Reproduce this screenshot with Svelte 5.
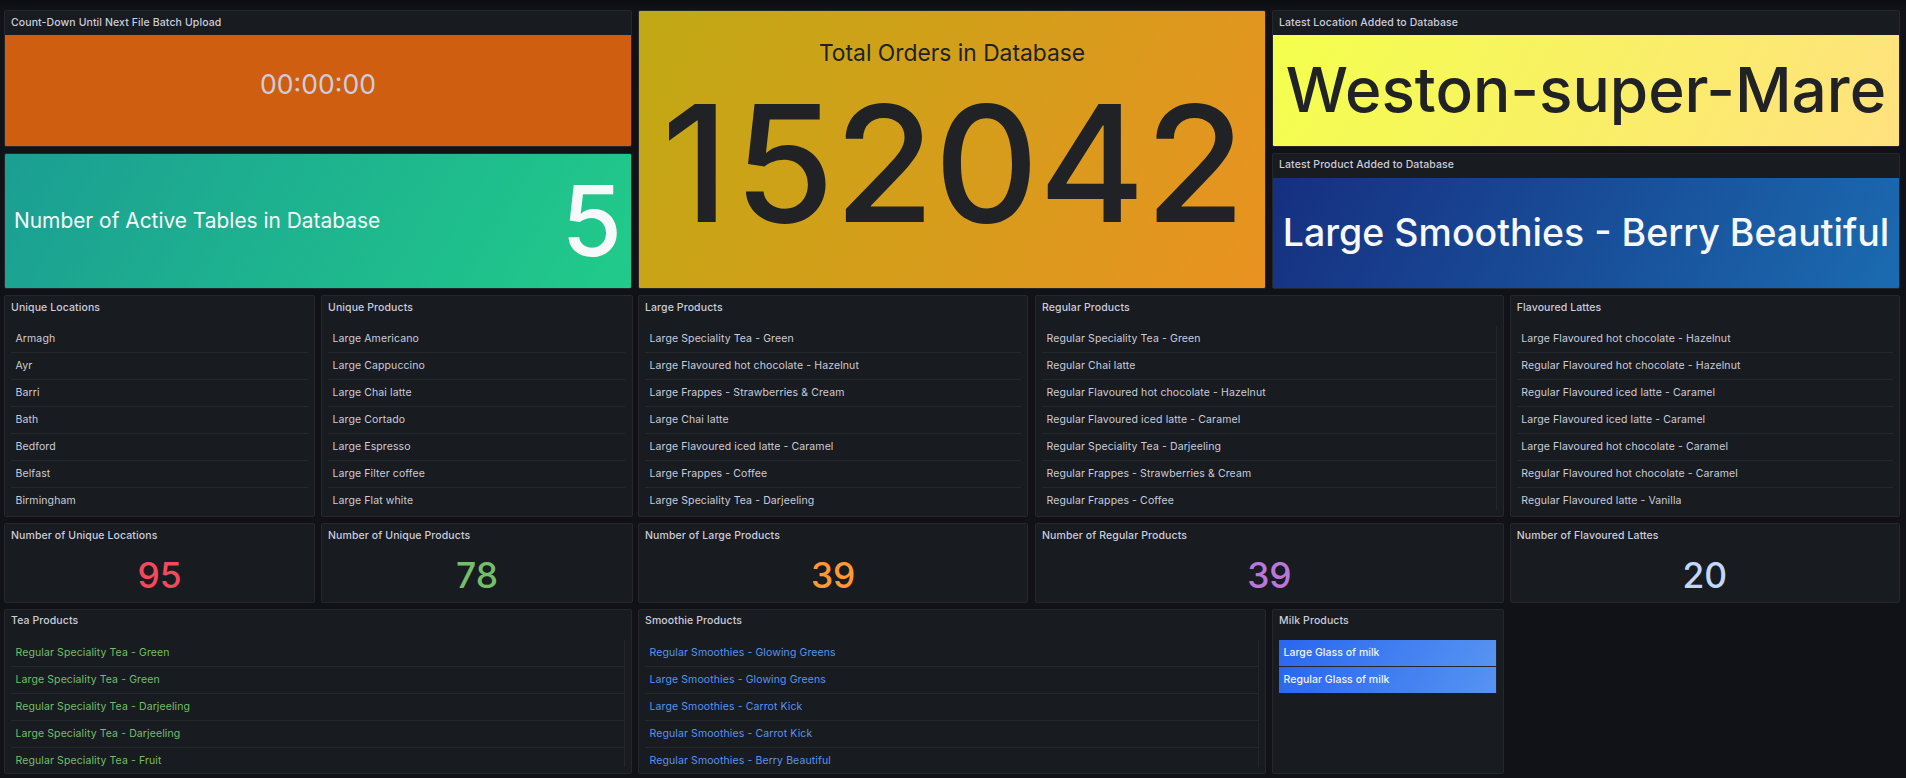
<script>
  const lists = [
    { title: 'Unique Locations', span: 4, items: ['Armagh', 'Ayr', 'Barri', 'Bath', 'Bedford', 'Belfast', 'Birmingham'] },
    { title: 'Unique Products', span: 4, nudge: 'wide', items: ['Large Americano', 'Large Cappuccino', 'Large Chai latte', 'Large Cortado', 'Large Espresso', 'Large Filter coffee', 'Large Flat white'] },
    { title: 'Large Products', span: 5, items: ['Large Speciality Tea - Green', 'Large Flavoured hot chocolate - Hazelnut', 'Large Frappes - Strawberries & Cream', 'Large Chai latte', 'Large Flavoured iced latte - Caramel', 'Large Frappes - Coffee', 'Large Speciality Tea - Darjeeling'] },
    { title: 'Regular Products', span: 6, edge: true, items: ['Regular Speciality Tea - Green', 'Regular Chai latte', 'Regular Flavoured hot chocolate - Hazelnut', 'Regular Flavoured iced latte - Caramel', 'Regular Speciality Tea - Darjeeling', 'Regular Frappes - Strawberries & Cream', 'Regular Frappes - Coffee'] },
    { title: 'Flavoured Lattes', span: 5, items: ['Large Flavoured hot chocolate - Hazelnut', 'Regular Flavoured hot chocolate - Hazelnut', 'Regular Flavoured iced latte - Caramel', 'Large Flavoured iced latte - Caramel', 'Large Flavoured hot chocolate - Caramel', 'Regular Flavoured hot chocolate - Caramel', 'Regular Flavoured latte - Vanilla'] }
  ];
  const stats = [
    { title: 'Number of Unique Locations', value: 95, color: 'red', span: 4 },
    { title: 'Number of Unique Products', value: 78, color: 'green', span: 4, nudge: 'wide' },
    { title: 'Number of Large Products', value: 39, color: 'orange', span: 5 },
    { title: 'Number of Regular Products', value: 39, color: 'purple', span: 6 },
    { title: 'Number of Flavoured Lattes', value: 20, color: 'ice', span: 5 }
  ];
  const bottom = [
    { title: 'Tea Products', tone: 'tea', span: 8, items: ['Regular Speciality Tea - Green', 'Large Speciality Tea - Green', 'Regular Speciality Tea - Darjeeling', 'Large Speciality Tea - Darjeeling', 'Regular Speciality Tea - Fruit'] },
    { title: 'Smoothie Products', tone: 'smoothie', span: 8, items: ['Regular Smoothies - Glowing Greens', 'Large Smoothies - Glowing Greens', 'Large Smoothies - Carrot Kick', 'Regular Smoothies - Carrot Kick', 'Regular Smoothies - Berry Beautiful'] }
  ];
</script>

<main class="dashboard">
  <section class="panel w8 h5">
    <h2>Count-Down Until Next File Batch Upload</h2>
    <div class="fill countdown"><span>00:00:00</span></div>
  </section>
  <section class="panel w8 h10">
    <div class="fill orders">
      <span class="caption">Total Orders in Database</span>
      <span class="total">152042</span>
    </div>
  </section>
  <section class="panel w8 h5">
    <h2>Latest Location Added to Database</h2>
    <div class="fill location"><span>Weston-super-Mare</span></div>
  </section>
  <section class="panel w8 h5">
    <div class="fill tables">
      <span class="label">Number of Active Tables in Database</span>
      <span class="count">5</span>
    </div>
  </section>
  <section class="panel w8 h5">
    <h2 class="raised">Latest Product Added to Database</h2>
    <div class="fill product"><span>Large Smoothies - Berry Beautiful</span></div>
  </section>

  {#each lists as p}
    <section class="panel w{p.span} h8 {p.nudge ?? ''}">
      <h2>{p.title}</h2>
      <div class="body">
        <ul class:edge={p.edge}>
          {#each p.items as item}<li>{item}</li>{/each}
        </ul>
      </div>
    </section>
  {/each}

  {#each stats as s}
    <section class="panel w{s.span} h3 {s.nudge ?? ''}">
      <h2>{s.title}</h2>
      <div class="stat {s.color}">{s.value}</div>
    </section>
  {/each}

  {#each bottom as p}
    <section class="panel w{p.span} h6">
      <h2 class="raised">{p.title}</h2>
      <div class="body">
        <ul class="edge {p.tone}">
          {#each p.items as item}<li>{item}</li>{/each}
        </ul>
      </div>
    </section>
  {/each}
  <section class="panel w3 h6">
    <h2 class="raised">Milk Products</h2>
    <div class="body">
      <ul class="milk">
        <li>Large Glass of milk</li>
        <li>Regular Glass of milk</li>
      </ul>
    </div>
  </section>
</main>

<style>
  :global(body) {
    background: #111217;
    overflow: hidden;
  }
  .dashboard {
    box-sizing: border-box;
    width: 1906px;
    height: 778px;
    padding: 10px 6px 4px 4px;
    display: grid;
    grid-template-columns: repeat(24, 73.25px);
    grid-auto-rows: 22.5px;
    gap: 6px;
    font-family: Inter, sans-serif;
    font-size: 10.5px;
    letter-spacing: 0.01em;
    color: #ccccdc;
    background: linear-gradient(#0c0d11, #111217 9px);
  }
  .panel {
    box-sizing: border-box;
    display: flex;
    flex-direction: column;
    min-width: 0;
    min-height: 0;
    overflow: hidden;
    background: #181b1f;
    border: 1px solid #25272c;
    border-radius: 2px;
  }
  .w3 { grid-column: span 3; }
  .w4 { grid-column: span 4; }
  .w5 { grid-column: span 5; }
  .w6 { grid-column: span 6; margin-left: 0.75px; }
  .w8 { grid-column: span 8; }
  .wide { margin-right: -1px; }
  .h3 { grid-row: span 3; }
  .h5 { grid-row: span 5; }
  .h6 { grid-row: span 6; }
  .h8 { grid-row: span 8; }
  .h10 { grid-row: span 10; }
  h2 {
    flex: none;
    height: 24px;
    line-height: 23px;
    margin: 0;
    padding: 0 6px;
    font-size: 10.5px;
    font-weight: 500;
    white-space: nowrap;
  }
  .raised { line-height: 21px; }
  .fill {
    flex: 1;
    min-height: 0;
    display: flex;
    align-items: center;
    justify-content: center;
    white-space: nowrap;
    letter-spacing: 0;
  }
  .countdown {
    background: #cf5e11;
    align-items: flex-start;
    padding-top: 29px;
    font-size: 26.6px;
    line-height: 40px;
  }
  .orders {
    flex-direction: column;
    justify-content: flex-start;
    color: #202226;
    background: linear-gradient(120deg, #c1a914, #e99221);
  }
  .caption {
    margin-top: 27px;
    font-size: 22.8px;
    line-height: 30px;
  }
  .total {
    margin: 14px 0 0 2.5px;
    font-size: 162px;
    line-height: 162px;
    font-weight: 500;
  }
  .total::first-letter { letter-spacing: 5.5px; }
  .location {
    color: #202226;
    font-size: 62.1px;
    font-weight: 500;
    line-height: 74px;
    padding-bottom: 1px;
    background: linear-gradient(120deg, #f3ff4c, #ffe17f);
  }
  .tables {
    justify-content: space-between;
    padding: 0 9px;
    color: #f7f8fa;
    background: linear-gradient(120deg, #1b9e93, #21cb8a);
  }
  .label { font-size: 20.9px; }
  .count {
    font-size: 98px;
    line-height: 98px;
    font-weight: 500;
  }
  .product {
    color: #f7f8fa;
    font-size: 37.5px;
    font-weight: 500;
    background: linear-gradient(120deg, #162f80, #1b6bb0);
  }
  .body {
    flex: 1;
    min-height: 0;
    display: flex;
    padding: 6px;
  }
  .wide .body { padding-right: 7.5px; }
  ul {
    flex: 1;
    min-width: 0;
    overflow: hidden;
    margin: 0;
    padding: 0;
    list-style: none;
  }
  .edge { border-right: 1px solid #25272c; }
  li {
    box-sizing: border-box;
    height: 27px;
    line-height: 25px;
    padding: 0 4.5px;
    border-bottom: 1px solid #25272c;
    white-space: nowrap;
  }
  .tea { color: #73bf69; }
  .smoothie { color: #5794f2; }
  .milk {
    align-self: flex-start;
    border-right: 1px solid #25272c;
    color: #f0f3fc;
    font-weight: 500;
    letter-spacing: 0.003em;
  }
  .milk li {
    background: linear-gradient(120deg, #2966ef, #5794f2) padding-box;
  }
  .milk li:last-child { border-bottom-color: transparent; }
  .stat {
    flex: 1;
    display: flex;
    align-items: center;
    justify-content: center;
    padding-top: 2px;
    font-size: 35.4px;
    line-height: 40px;
    font-weight: 500;
    letter-spacing: 0;
  }
  .red { color: #f2495c; }
  .green { color: #73bf69; }
  .orange { color: #ff9830; }
  .purple { color: #b877d9; }
  .ice { color: #c0d8ff; }
</style>
